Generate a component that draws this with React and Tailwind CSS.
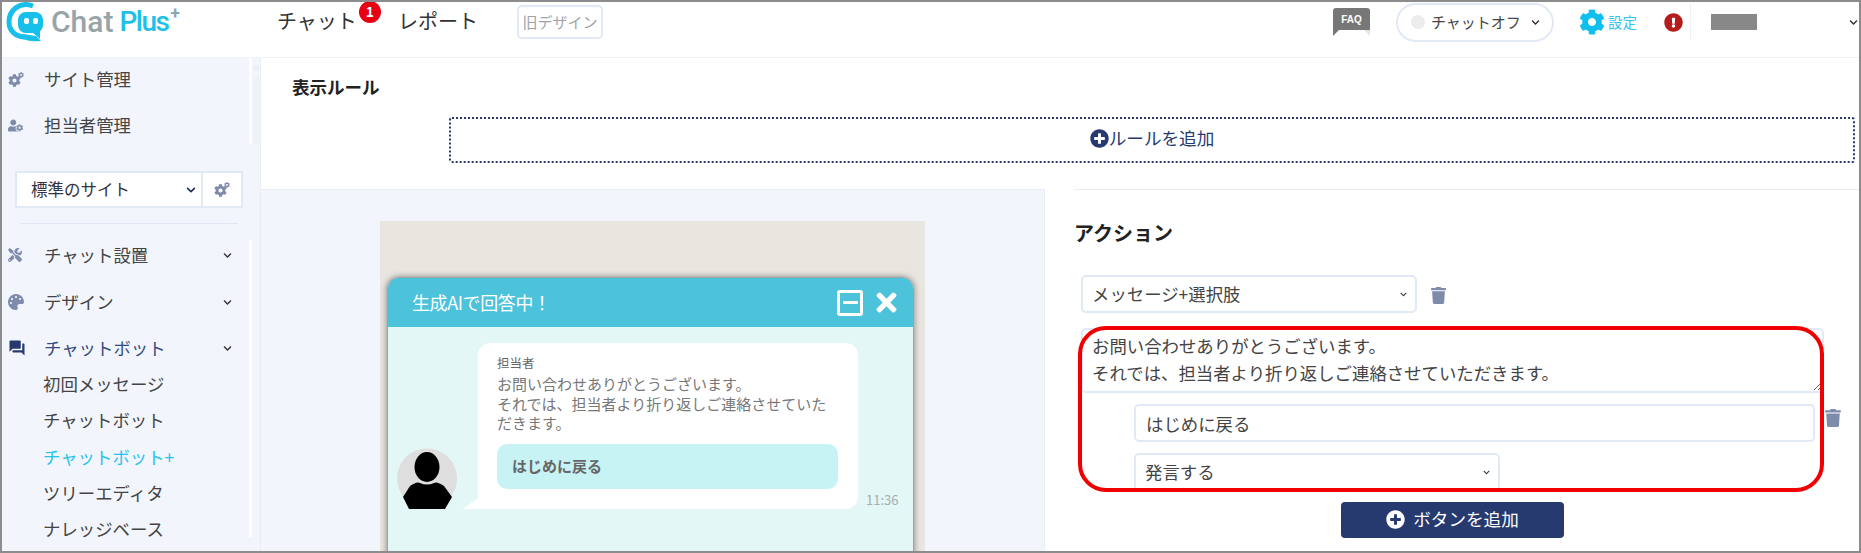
import React from 'react';
import { FaUserCog, FaTools, FaPalette, FaTrash, FaPlusCircle, FaCog, FaExclamationCircle, FaChevronDown, FaTimes } from 'react-icons/fa';
import { MdQuestionAnswer } from 'react-icons/md';

const jp = "font-['Noto_Sans_CJK_JP','Noto_Sans',sans-serif]";

const Logo = () => (
    <div className="flex items-center w-[275px] pl-[4px] font-['Roboto',sans-serif]">
        <svg width="38" height="40" viewBox="0 0 38 40" className="shrink-0">
            <path d="M27 4 C14 -1 3 8 3 20 C3 29 10 35 19 35" fill="none" stroke="#16c0ea" strokeWidth="5" />
            <path d="M17 32 L30 34 L35 39 Q24 40 17 37 Z" fill="#16c0ea" />
            <rect x="12" y="10" width="25" height="21" rx="8" fill="#16c0ea" />
            <path d="M26 30 L34 28 L34 37 Z" fill="#16c0ea" />
            <rect x="18" y="16" width="5" height="6" rx="2" fill="#fff" />
            <rect x="27" y="16" width="5" height="6" rx="2" fill="#fff" />
        </svg>
        <span className="ml-[7px] text-[30px] font-medium text-[#98a4a8] leading-none">Chat</span>
        <span className="ml-[6px] text-[28px] font-medium tracking-[-1.5px] text-[#1fc0e8] leading-none">Plus</span>
        <span className="ml-[2px] mb-[18px] text-[17px] font-bold text-[#7fa9b5] leading-none">+</span>
    </div>
);

const TopBar = () => (
    <div className="flex items-center h-[56px] pb-[15px] bg-white border-b border-[#eef2f9] shrink-0">
        <Logo />
        <div className="relative mb-[3px] text-[20px] text-[#333] w-[121px]">
            チャット
            <span className="absolute left-[82px] -top-[5px] w-[22px] h-[22px] rounded-full bg-[#e60012] text-white text-[14px] font-bold flex items-center justify-center">1</span>
        </div>
        <div className="mb-[3px] text-[20px] text-[#333] w-[119px]">レポート</div>
        <div className="w-[86px] h-[34px] border-2 border-[#e2e9f6] rounded-[5px] text-[15px] text-[#a0a3a8] flex items-center justify-center">旧デザイン</div>

        <div className="ml-auto flex items-center">
            <div className="flex flex-col w-[37px] mr-[26px]">
                <div className="h-[22px] bg-[#777] rounded-t-[3px] flex items-center justify-center text-[10px] font-bold text-white font-['Liberation_Sans',sans-serif]">FAQ</div>
                <div className="flex justify-between h-[6px]">
                    <div className="w-0 h-0 border-t-[6px] border-t-[#777] border-r-[6px] border-r-transparent" />
                    <div className="w-0 h-0 border-t-[6px] border-t-[#e6e6e0] border-l-[6px] border-l-transparent" />
                </div>
            </div>
            <div className="flex items-center w-[158px] h-[39px] border-2 border-[#e2e9f6] rounded-full pl-[13px]">
                <span className="w-[14px] h-[14px] rounded-full bg-[#ececec]" />
                <span className="ml-[6px] text-[15px] text-[#444]">チャットオフ</span>
                <FaChevronDown className="ml-[10px] text-[9px] text-[#333]" />
            </div>
            <FaCog className="ml-[25px] text-[26px] text-[#0fc0ee]" />
            <span className="ml-[3px] text-[14.5px] text-[#32c5ee]">設定</span>
            <FaExclamationCircle className="ml-[27px] text-[19px] text-[#b71c1c]" />
            <div className="ml-[7px] w-px h-[38px] bg-[#eef2f9]" />
            <div className="ml-[20px] w-[46px] h-[16px] bg-[#888]" />
            <FaChevronDown className="ml-[92px] mr-[1px] text-[9px] text-[#333]" />
        </div>
    </div>
);

const GearIcon = () => (
    <span className="relative inline-block w-[16px] h-[15px]">
        <FaCog className="absolute left-0 bottom-0 text-[13px] text-[#7f8bab]" />
        <FaCog className="absolute right-0 top-0 text-[6px] text-[#7f8bab]" />
    </span>
);

const NavRow = ({ icon, label, chevron, className = '' }) => (
    <div className={`flex items-center h-[46px] pl-[6px] text-[17.4px] text-[#444] ${className}`}>
        <span className="w-[36px] flex justify-start">{icon}</span>
        <span>{label}</span>
        {chevron && <FaChevronDown className="ml-auto mr-[15px] text-[9px] text-[#333]" />}
    </div>
);

const SubRow = ({ label, active }) => (
    <div className={`h-[36.25px] flex items-center pl-[41px] text-[17.4px] ${active ? 'text-[#25c3f0]' : 'text-[#444]'}`}>{label}</div>
);

const Sidebar = () => (
    <div className="flex shrink-0 h-full w-[259px] bg-[#f2f5fb] border-r border-[#e8edf6]">
        <div className="w-[245px] shrink-0 overflow-hidden">
            <NavRow className="-mt-[2px]" icon={<GearIcon />} label="サイト管理" />
            <NavRow icon={<FaUserCog className="text-[15px] text-[#7f8bab]" />} label="担当者管理" />
            <div className="mt-[23px] ml-[13px] w-[228px] h-[37px] flex bg-white border-2 border-[#e2e9f6] text-[16.5px] text-[#334]">
                <div className="flex-1 flex items-center pl-[14px] border-r-2 border-[#e2e9f6]">
                    標準のサイト
                    <FaChevronDown className="ml-auto mr-[5px] text-[10px] text-[#1e2f5f]" />
                </div>
                <div className="w-[38px] flex items-center justify-center">
                    <GearIcon />
                </div>
            </div>
            <div className="mt-[15px] ml-[18px] w-[218px] h-px bg-[#dfe6f4]" />
            <NavRow className="mt-[8px]" icon={<FaTools className="text-[14px] text-[#7f8bab]" />} label="チャット設置" chevron />
            <NavRow className="mt-px" icon={<FaPalette className="text-[16px] text-[#7f8bab]" />} label="デザイン" chevron />
            <NavRow className="!h-[36px] mt-[5px]" icon={<MdQuestionAnswer className="text-[18px] text-[#263a70]" />} label={<span className="text-[#334a80]">チャットボット</span>} chevron />
            <SubRow label="初回メッセージ" />
            <SubRow label="チャットボット" />
            <SubRow label="チャットボット+" active />
            <SubRow label="ツリーエディタ" />
            <SubRow label="ナレッジベース" />
        </div>
        {/* scrollbar strips */}
        <div className="ml-[2px] w-[4px] flex flex-col pb-[14px]">
            <div className="h-[86px] bg-white" />
            <div className="mt-[96px] flex-1 bg-white" />
        </div>
        <div className="flex flex-col items-center w-[8px] pt-[6px]">
            <div className="w-0 h-0 border-b-[6px] border-b-[#e8edf6] border-x-[4px] border-x-transparent" />
            <div className="mt-[7px] w-[7px] h-[66px] rounded-t-[4px] bg-[#eef2f9]" />
        </div>
    </div>
);

const Avatar = () => (
    <svg width="60" height="61" viewBox="0 0 60 61" className="shrink-0">
        <circle cx="30" cy="30.5" r="30" fill="#dedede" />
        <ellipse cx="30" cy="19" rx="12.5" ry="15" fill="#000" />
        <path d="M6 49 L13 38 Q20 33 23 35 Q30 38 37 35 Q40 33 47 38 L55 49 L48 61 H12 Z" fill="#000" />
    </svg>
);

const ChatPreview = () => (
    <div className="w-[784px] h-full bg-[#f2f5fb] border-t border-r border-[#e8edf6] pl-[119px] pr-[119px] pt-[31px] overflow-hidden">
        <div className="h-[400px] bg-[#e9e6e0] pl-[7px] pr-[11px] pt-[56px]">
            <div className="h-[400px] rounded-t-[12px] overflow-hidden border border-[#9aa5a8] bg-[#e2f7f6] shadow-[0_0_6px_rgba(0,0,0,0.45)]">
                <div className="h-[49px] bg-[#4dc2db] flex items-center pl-[24px] pr-[12px] text-[18px] tracking-[-0.4px] text-white">
                    生成AIで回答中！
                    <span className="ml-auto w-[26px] h-[26px] border-[3px] border-white rounded-[3px] flex items-center justify-center">
                        <span className="w-[15px] h-[3px] bg-white" />
                    </span>
                    <FaTimes className="ml-[9px] text-[29px] text-white" />
                </div>
                <div className="flex items-end pt-[16px] pl-[9px]">
                    <Avatar />
                    <div className="relative ml-[21px] w-[380px] h-[166px] bg-white rounded-[12px] rounded-bl-none px-[19px] pt-[11px]">
                        <span className="absolute -left-[15px] bottom-0 w-0 h-0 border-b-[11px] border-b-white border-l-[15px] border-l-transparent" />
                        <div className="text-[12.5px] leading-[18px] text-[#666]">担当者</div>
                        <div className="mt-[2px] text-[15px] leading-[19.5px] text-[#777]">
                            お問い合わせありがとうございます。<br />
                            それでは、担当者より折り返しご連絡させていた<br />
                            だきます。
                        </div>
                        <div className="mt-[11px] h-[45px] w-[341px] bg-[#c8f3f5] rounded-[10px] flex items-center pl-[15px] text-[15px] font-bold text-[#666]">はじめに戻る</div>
                    </div>
                    <span className="ml-[8px] text-[13px] leading-[18px] text-[#a5adad]">11:36</span>
                </div>
            </div>
        </div>
    </div>
);

const SelectBox = ({ label, className = '' }) => (
    <div className={`h-[38px] flex items-center bg-white border-2 border-[#e2e9f6] rounded-[5px] pl-[9px] pr-[8px] text-[17.4px] text-[#444] ${className}`}>
        {label}
        <FaChevronDown className="ml-auto text-[7px] text-[#333]" />
    </div>
);

const ActionPanel = () => (
    <div className="relative flex-1 bg-white pl-[29px] overflow-hidden">
        <div className="h-px bg-[#e8edf6]" />
        <h2 className="pt-[29px] text-[20px] leading-[28px] font-bold text-[#222]">アクション</h2>
        <div className="mt-[28px] ml-[7px] flex items-center">
            <SelectBox label="メッセージ+選択肢" className="w-[336px]" />
            <FaTrash className="ml-[13px] mt-[2px] text-[17px] text-[#7f8bab]" />
        </div>
        <textarea
            readOnly
            defaultValue={'お問い合わせありがとうございます。\nそれでは、担当者より折り返しご連絡させていただきます。'}
            className="block mt-[15px] ml-[7px] w-[743px] h-[65px] pl-[9px] pr-[10px] pt-[2px] border-2 border-[#e2e9f6] rounded-[5px] text-[17.4px] leading-[27px] text-[#444] outline-none"
        />
        <div className="mt-[11px] ml-[60px] flex items-center">
            <input
                readOnly
                defaultValue="はじめに戻る"
                className="w-[681px] h-[38px] px-[10px] border-2 border-[#e2e9f6] rounded-[5px] text-[17.4px] text-[#444] outline-none"
            />
            <FaTrash className="ml-[9px] mb-[10px] text-[18px] text-[#7f8bab]" />
        </div>
        <SelectBox label="発言する" className="mt-[11px] ml-[60px] w-[366px]" />
        <div className="mt-[11px] ml-[267px] w-[223px] h-[36px] pb-[2px] bg-[#263a70] rounded-[4px] flex items-center justify-center text-[17.6px] text-white">
            <FaPlusCircle className="mr-[8px] text-[19px] text-white" />
            ボタンを追加
        </div>
        {/* red annotation around the reply */}
        <div className="absolute left-[33px] top-[137px] w-[746px] h-[166px] border-[4px] border-[#f00000] rounded-[28px]" />
    </div>
);

const App = () => {
    return (
        <div className={`w-[1861px] h-[553px] overflow-hidden flex flex-col bg-white border-2 border-[#8c8c8c] ${jp}`}>
            <TopBar />
            <div className="flex flex-1 min-h-0">
                <Sidebar />
                <div className="flex-1 flex flex-col min-w-0">
                    <div className="h-[131px] shrink-0 bg-white pl-[31px]">
                        <h2 className="pt-[16px] text-[17.5px] leading-[26px] font-bold text-[#222]">表示ルール</h2>
                        <div className="mt-[17px] ml-[157px] w-[1406px] h-[46px] pb-[3px] border-2 border-dotted border-[#263a70] rounded-[3px] flex items-center justify-center text-[17.6px] text-[#263a70]">
                            <FaPlusCircle className="text-[19px]" />
                            ルールを追加
                        </div>
                    </div>
                    <div className="flex flex-1 min-h-0">
                        <ChatPreview />
                        <ActionPanel />
                    </div>
                </div>
            </div>
        </div>
    );
};

export default App;
